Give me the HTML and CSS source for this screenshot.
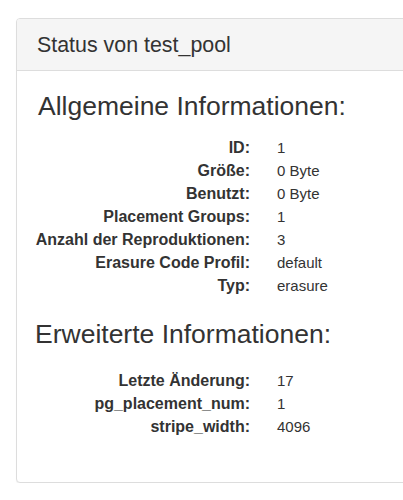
FILE: index.html
```html
<!DOCTYPE html>
<html lang="de">
<head>
<meta charset="utf-8">
<link rel="stylesheet" href="styles.css">
</head>
<body>
<div class="panel">
  <div class="panel-heading">Status von test_pool</div>
  <div class="panel-body">
    <h3 class="section-title first">Allgemeine Informationen:</h3>
    <dl class="info">
      <dt>ID:</dt><dd>1</dd>
      <dt>Größe:</dt><dd>0 Byte</dd>
      <dt>Benutzt:</dt><dd>0 Byte</dd>
      <dt>Placement Groups:</dt><dd>1</dd>
      <dt>Anzahl der Reproduktionen:</dt><dd>3</dd>
      <dt>Erasure Code Profil:</dt><dd>default</dd>
      <dt>Typ:</dt><dd>erasure</dd>
    </dl>
    <h3 class="section-title second">Erweiterte Informationen:</h3>
    <dl class="info">
      <dt>Letzte Änderung:</dt><dd>17</dd>
      <dt>pg_placement_num:</dt><dd>1</dd>
      <dt>stripe_width:</dt><dd>4096</dd>
    </dl>
  </div>
</div>
</body>
</html>
```
FILE: styles.css
```css
html, body {
  margin: 0;
  padding: 0;
  background: #fff;
  overflow: hidden;
}
body {
  font-family: "Liberation Sans", Arial, sans-serif;
  color: #333;
  font-size: 15px;
}
.panel {
  margin: 18px 0 0 16px;
  width: 420px;
  border: 1px solid #ddd;
  border-radius: 4px;
  box-shadow: 0 1px 1px rgba(0, 0, 0, 0.05);
  background: #fff;
}
.panel-heading {
  height: 49px;
  line-height: 49px;
  padding: 2px 20px 0 20px;
  font-size: 21.4px;
  background: #f5f5f5;
  border-bottom: 1px solid #ddd;
  border-radius: 3px 3px 0 0;
  color: #333;
}
.panel-body {
  padding: 21px 0 44px 0;
}
.section-title {
  margin: 0;
  font-size: 26.5px;
  font-weight: normal;
  line-height: 29px;
  color: #333;
}
.section-title.first {
  margin-left: 21px;
}
.section-title.second {
  margin-left: 18px;
  margin-top: 23px;
}
.info {
  display: grid;
  grid-template-columns: 233px auto;
  column-gap: 27px;
  align-items: baseline;
  margin: 15px 0 0 0;
  line-height: 23px;
}
.section-title.second + .info {
  margin-top: 20px;
}
.info dt {
  font-weight: bold;
  font-size: 16px;
  text-align: right;
  white-space: nowrap;
}
.info dd {
  margin: 0;
  font-size: 15px;
}
```
